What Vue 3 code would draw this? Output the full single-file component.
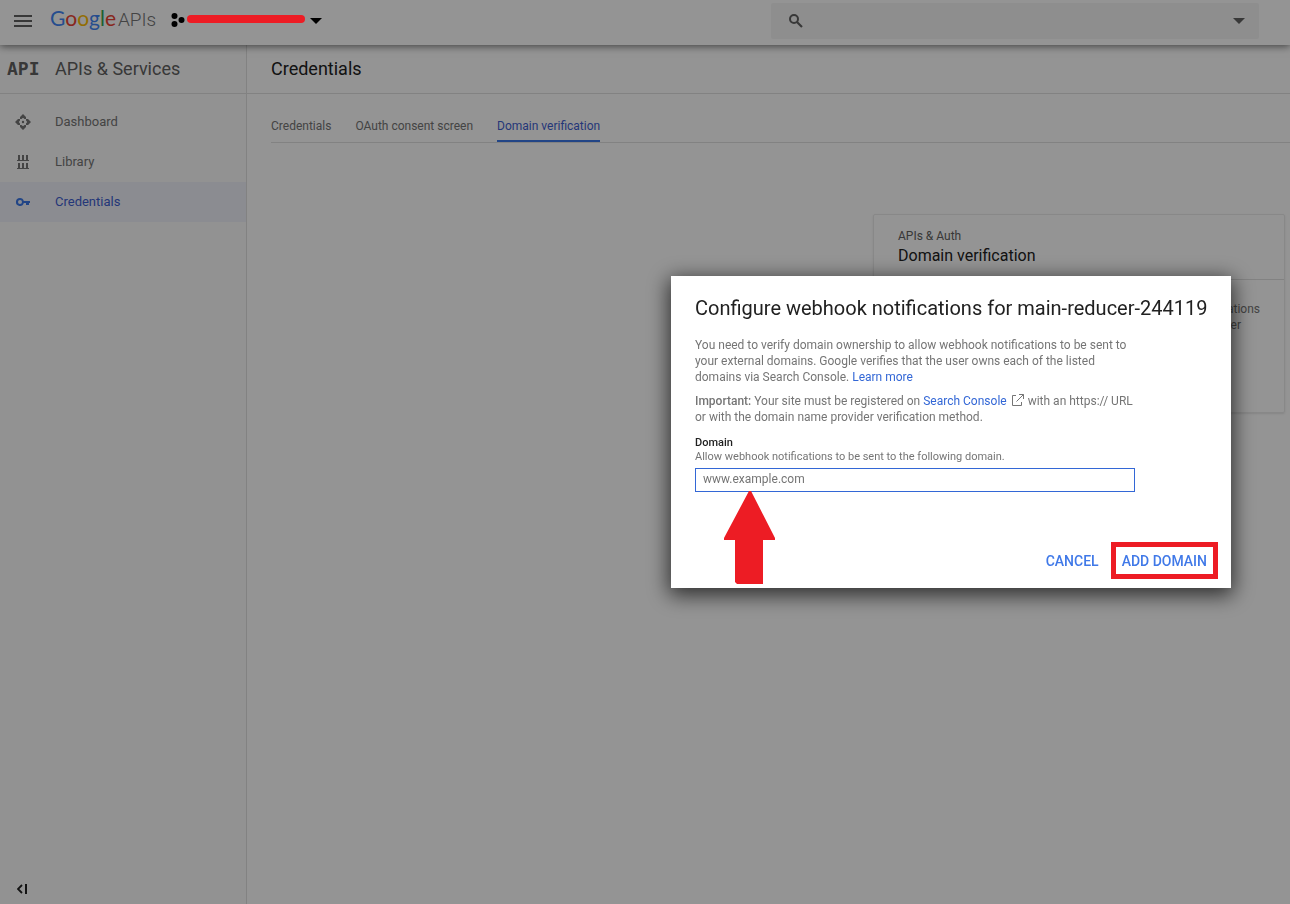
<script setup>
import { ref } from 'vue'

const domain = ref('')
const nav = [
  { label: 'Dashboard', icon: 'dashboard' },
  { label: 'Library', icon: 'library' },
  { label: 'Credentials', icon: 'key', active: true }
]
const tabs = [
  { label: 'Credentials' },
  { label: 'OAuth consent screen' },
  { label: 'Domain verification', active: true }
]
</script>

<template>
  <div class="page">
    <header class="topbar">
      <button class="icon-btn menu" aria-label="Main menu">
        <svg width="18" height="12" viewBox="0 0 18 12"><path d="M0 0h18v2H0zM0 5h18v2H0zM0 10h18v2H0z" fill="currentColor" /></svg>
      </button>
      <a href="#" class="brand"><span class="google"><span class="b">G</span><span class="r">o</span><span class="y">o</span><span class="b">g</span><span class="g">l</span><span class="r">e</span></span><span class="apis">APIs</span></a>
      <button class="project" aria-label="Select a project">
        <svg width="14" height="14" viewBox="0 0 14 14"><circle cx="3.5" cy="3" r="3" /><circle cx="3.5" cy="11" r="3" /><circle cx="10.5" cy="7" r="3" /></svg>
        <span class="redaction"></span>
        <svg class="caret" width="12" height="6" viewBox="0 0 12 6"><path d="M0 0h12L6 6z" /></svg>
      </button>
      <div class="search">
        <svg width="14" height="14" viewBox="0 0 14 14" fill="none" stroke="currentColor"><circle cx="5" cy="5" r="4" stroke-width="2" /><path d="M8 8l5 5" stroke-width="2.2" /></svg>
        <input type="text" aria-label="Search" />
        <button class="icon-btn" aria-label="Search options">
          <svg width="12" height="6" viewBox="0 0 12 6"><path d="M0 0h12L6 6z" fill="currentColor" /></svg>
        </button>
      </div>
    </header>

    <div class="body">
      <aside class="sidebar">
        <div class="side-head"><span class="api-mark">API</span><span>APIs &amp; Services</span></div>
        <nav>
          <a v-for="n in nav" :key="n.label" href="#" :class="{ active: n.active }">
            <svg v-if="n.icon === 'dashboard'" width="16" height="16" viewBox="0 0 16 16" fill="currentColor">
              <path d="M8 0l3 3v2H9.500L8 3.800 6.500 5H5V3zM8 16l3-3v-2H9.500L8 12.200 6.500 11H5v2zM0 8l3-3h2v1.500L3.800 8 5 9.500V11H3zM16 8l-3-3h-2v1.500L12.200 8 11 9.500V11h2z" /><circle cx="8" cy="8" r="1.200" />
            </svg>
            <svg v-else-if="n.icon === 'library'" width="16" height="16" viewBox="0 0 16 16" fill="currentColor">
              <path d="M3 1h2v5h2V1h2v5h2V1h2v5h1v1H2V6h1zM3 9h2v5h2V9h2v5h2V9h2v5h1v1H2v-1h1z" />
            </svg>
            <svg v-else width="16" height="16" viewBox="0 0 16 16" fill="currentColor">
              <path fill-rule="evenodd" d="M5 4a4 4 0 0 1 3.800 3H15v2h-1v2h-3V9H8.800A4 4 0 1 1 5 4zm0 2a2 2 0 1 0 0 4 2 2 0 0 0 0-4z" />
            </svg>
            <span>{{ n.label }}</span>
          </a>
        </nav>
        <button class="icon-btn collapse" aria-label="Collapse menu">
          <svg width="10" height="10" viewBox="0 0 10 10"><path d="M5 1L1 5l4 4" fill="none" stroke="currentColor" stroke-width="1.800" /><path d="M8 0h2v10H8z" fill="currentColor" /></svg>
        </button>
      </aside>

      <main>
        <h1>Credentials</h1>
        <nav class="tabs">
          <a v-for="t in tabs" :key="t.label" href="#" :class="{ active: t.active }">{{ t.label }}</a>
        </nav>
        <section class="card">
          <header>
            <p>APIs &amp; Auth</p>
            <h2>Domain verification</h2>
          </header>
          <p class="card-text">You need to verify domain ownership to allow webhook notifications to be sent to your external domains. Google verifies that the user owns each of the listed domains via Search Console.</p>
        </section>
      </main>
    </div>

    <div class="scrim">
      <form class="dialog" role="dialog" aria-labelledby="dialog-title" @submit.prevent>
        <h2 id="dialog-title">Configure webhook notifications for main-reducer-244119</h2>
        <div class="copy">
          <p>You need to verify domain ownership to allow webhook notifications to be sent to your external domains. Google verifies that the user owns each of the listed domains via Search Console. <a href="#">Learn more</a></p>
          <p><b>Important:</b> Your site must be registered on <a href="#">Search Console</a><svg class="ext" width="12" height="12" viewBox="0 0 12 12" fill="none" stroke="currentColor"><path d="M4 1.500H.5v10h9V8M7 .5h4.500V5M11.500.5l-7 7" /></svg>with an https:// URL or with the domain name provider verification method.</p>
          <label for="domain">Domain</label>
          <p id="domain-hint" class="hint">Allow webhook notifications to be sent to the following domain.</p>
          <div class="field">
            <input id="domain" v-model="domain" type="text" placeholder="www.example.com" aria-describedby="domain-hint" />
            <svg class="arrow" width="52" height="94" viewBox="0 0 52 94"><path d="M25 0h2l24 47v2H39v44H13l-2-2V49H0v-2z" fill="#ed1c24" /></svg>
          </div>
        </div>
        <div class="actions">
          <button type="button">CANCEL</button>
          <button type="submit" class="marked">ADD DOMAIN</button>
        </div>
      </form>
    </div>
  </div>
</template>

<style>
body {
  margin: 0;
}
</style>

<style scoped>
.page {
  min-height: 100vh;
  display: flex;
  flex-direction: column;
  background: #fff;
  color: #212121;
  font: 12px/16px Roboto, "Liberation Sans", sans-serif;
}
* {
  box-sizing: border-box;
}
h1, h2, p {
  margin: 0;
  font-weight: 400;
}
a {
  color: #3367d6;
  text-decoration: none;
}
button {
  border: 0;
  padding: 0;
  background: none;
  font: inherit;
  color: inherit;
}
svg {
  display: block;
  flex: none;
}
.icon-btn {
  display: flex;
  color: #616161;
}

.topbar {
  position: relative;
  height: 45px;
  display: flex;
  align-items: center;
  padding: 0 31px 4px 14px;
  background: #fff;
  box-shadow: 0 1px 8px rgba(0, 0, 0, 0.6);
}
.brand {
  width: 106px;
  display: flex;
  align-items: baseline;
  gap: 2px;
  margin: 0 15px 4px 18px;
  line-height: 24px;
}
.google {
  font-family: Lato, sans-serif;
  font-size: 21px;
}
.apis {
  font-size: 19px;
  font-weight: 300;
  color: #757575;
}
.b { color: #4285f4; }
.r { color: #ea4335; }
.y { color: #fbbc05; }
.g { color: #34a853; }
.project {
  position: relative;
  width: 151px;
  display: flex;
  align-items: center;
  justify-content: space-between;
}
.project > svg:first-child {
  margin-bottom: 2px;
}
.redaction {
  position: absolute;
  z-index: 20;
  left: 16px;
  right: 17px;
  top: 2px;
  height: 8px;
  border-radius: 4px;
  background: #ed1c24;
}
.search {
  flex: 0 1 488px;
  height: 36px;
  display: flex;
  align-items: center;
  margin-left: auto;
  padding: 0 14px 0 18px;
  border-radius: 2px;
  background: #f5f5f5;
  color: #616161;
}
.search input {
  flex: 1;
  min-width: 0;
  border: 0;
  background: none;
  font: inherit;
}

.body {
  flex: 1;
  display: flex;
}
.sidebar {
  width: 247px;
  flex: none;
  display: flex;
  flex-direction: column;
  border-right: 1px solid #e0e0e0;
  background: #fcfcfc;
}
.side-head {
  height: 49px;
  display: flex;
  align-items: center;
  border-bottom: 1px solid #e0e0e0;
  font-size: 18px;
  color: #616161;
}
.api-mark {
  width: 48px;
  margin-left: 7px;
  font: bold 18px/20px "DejaVu Sans Mono", monospace;
}
.sidebar nav {
  padding-top: 8px;
}
.sidebar nav a {
  height: 40px;
  display: flex;
  align-items: center;
  gap: 24px;
  padding-left: 15px;
  font-size: 13px;
  color: #757575;
}
.sidebar nav a.active {
  background: #f0f2fa;
  color: #3b78e7;
}
.sidebar nav a.active span {
  color: #3f5fd0;
}
.collapse {
  margin: auto 0 10px 17px;
  color: #212121;
}

main {
  flex: 1;
  min-width: 0;
}
h1 {
  height: 49px;
  padding-left: 24px;
  border-bottom: 1px solid #e0e0e0;
  font-size: 18px;
  line-height: 48px;
}
.tabs {
  display: flex;
  gap: 24px;
  margin: 16px 0 0 24px;
  border-bottom: 1px solid #e0e0e0;
}
.tabs a {
  height: 32px;
  line-height: 32px;
  color: #757575;
}
.tabs a.active {
  color: #3f5fd0;
  border-bottom: 2px solid #3b78e7;
}
.card {
  width: 412px;
  min-height: 199px;
  margin: 71px 5px 0 auto;
  border: 1px solid #ebebeb;
  border-radius: 2px;
  box-shadow: 0 1px 2px rgba(0, 0, 0, 0.1);
}
.card header {
  padding: 13px 24px 11px;
  border-bottom: 1px solid #e0e0e0;
  color: #616161;
}
.card h2 {
  font-size: 16px;
  line-height: 24px;
  color: #212121;
}
.card-text {
  padding: 21px 20px 21px 24px;
  color: #757575;
}

.scrim {
  position: fixed;
  inset: 0;
  z-index: 10;
  display: flex;
  justify-content: flex-end;
  align-items: flex-start;
  padding: 276px 59px 0 0;
  background: rgba(0, 0, 0, 0.42);
}
.dialog {
  width: 560px;
  padding: 20px 13px 9px 24px;
  background: #fff;
  box-shadow: 0 5px 20px 2px rgba(0, 0, 0, 0.7);
}
.dialog h2 {
  font-size: 20px;
  line-height: 24px;
}
.copy {
  width: 440px;
  margin-top: 17px;
  color: #757575;
}
.copy p {
  margin-bottom: 8px;
}
.copy b {
  font-weight: 500;
}
.ext {
  display: inline-block;
  vertical-align: -1px;
  margin: 0 4px 0 5px;
}
.copy label {
  display: block;
  margin-top: 11px;
  font-size: 11px;
  font-weight: 500;
  line-height: 14px;
  color: #212121;
}
.copy .hint {
  margin-bottom: 4px;
  font-size: 11px;
  line-height: 14px;
}
.field {
  position: relative;
}
.field input {
  display: block;
  width: 100%;
  height: 24px;
  padding: 0 7px 2px;
  border: 1px solid #3367d6;
  outline: none;
  font: inherit;
  color: #212121;
}
.field input::placeholder {
  color: #757575;
}
.arrow {
  position: absolute;
  left: 29px;
  top: 23px;
}
.actions {
  display: flex;
  justify-content: flex-end;
  align-items: center;
  gap: 12px;
  margin-top: 50px;
  font-size: 14px;
  font-weight: 500;
  color: #4079e8;
}
.marked {
  height: 37px;
  padding: 0 6px;
  border: 5px solid #ed1c24;
}
</style>
